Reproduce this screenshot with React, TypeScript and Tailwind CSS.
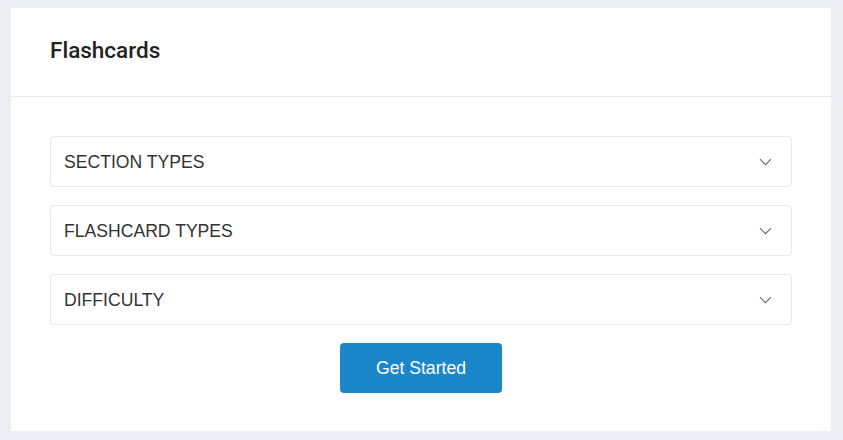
import React, { useState } from "react";

const sections = ["SECTION TYPES", "FLASHCARD TYPES", "DIFFICULTY"];

const Chevron: React.FC<{ open: boolean }> = ({ open }) => (
  <svg
    width="13"
    height="8"
    viewBox="0 0 13 8"
    fill="none"
    className={open ? "rotate-180" : ""}
  >
    <path d="M1 1.2l5.5 5.5 5.5-5.5" stroke="#666" strokeWidth="1.1" />
  </svg>
);

export default function App() {
  const [open, setOpen] = useState<number | null>(null);

  return (
    <div className="min-h-screen bg-[#edeef3] pt-[8px] pl-[11px] pr-[12px] pb-[9px]">
      <div className="bg-white w-[820px] h-[423px] flex flex-col">
        <div className="h-[89px] border-b border-[#e9e9ee] pl-[39px] flex items-center">
          <h1 className="text-[22.5px] font-medium text-[#222] font-['Roboto',sans-serif] pb-[2px]">
            Flashcards
          </h1>
        </div>
        <div className="px-[39px] pt-[39px] flex flex-col gap-[18px]">
          {sections.map((s, i) => (
            <button
              key={s}
              onClick={() => setOpen(open === i ? null : i)}
              className="h-[51px] w-full border border-[#e8e8ec] rounded-[4px] pl-[13px] pr-[19px] flex items-center justify-between text-left"
            >
              <span className="text-[17.6px] text-[#333] font-['Liberation_Sans',Arial,sans-serif] pt-[1px]">
                {s}
              </span>
              <Chevron open={open === i} />
            </button>
          ))}
          <div className="flex justify-center">
            <button className="w-[162px] h-[50px] rounded-[4px] bg-[#1a87cb] text-white text-[17.6px] font-['Liberation_Sans',Arial,sans-serif]">
              Get Started
            </button>
          </div>
        </div>
      </div>
    </div>
  );
}
